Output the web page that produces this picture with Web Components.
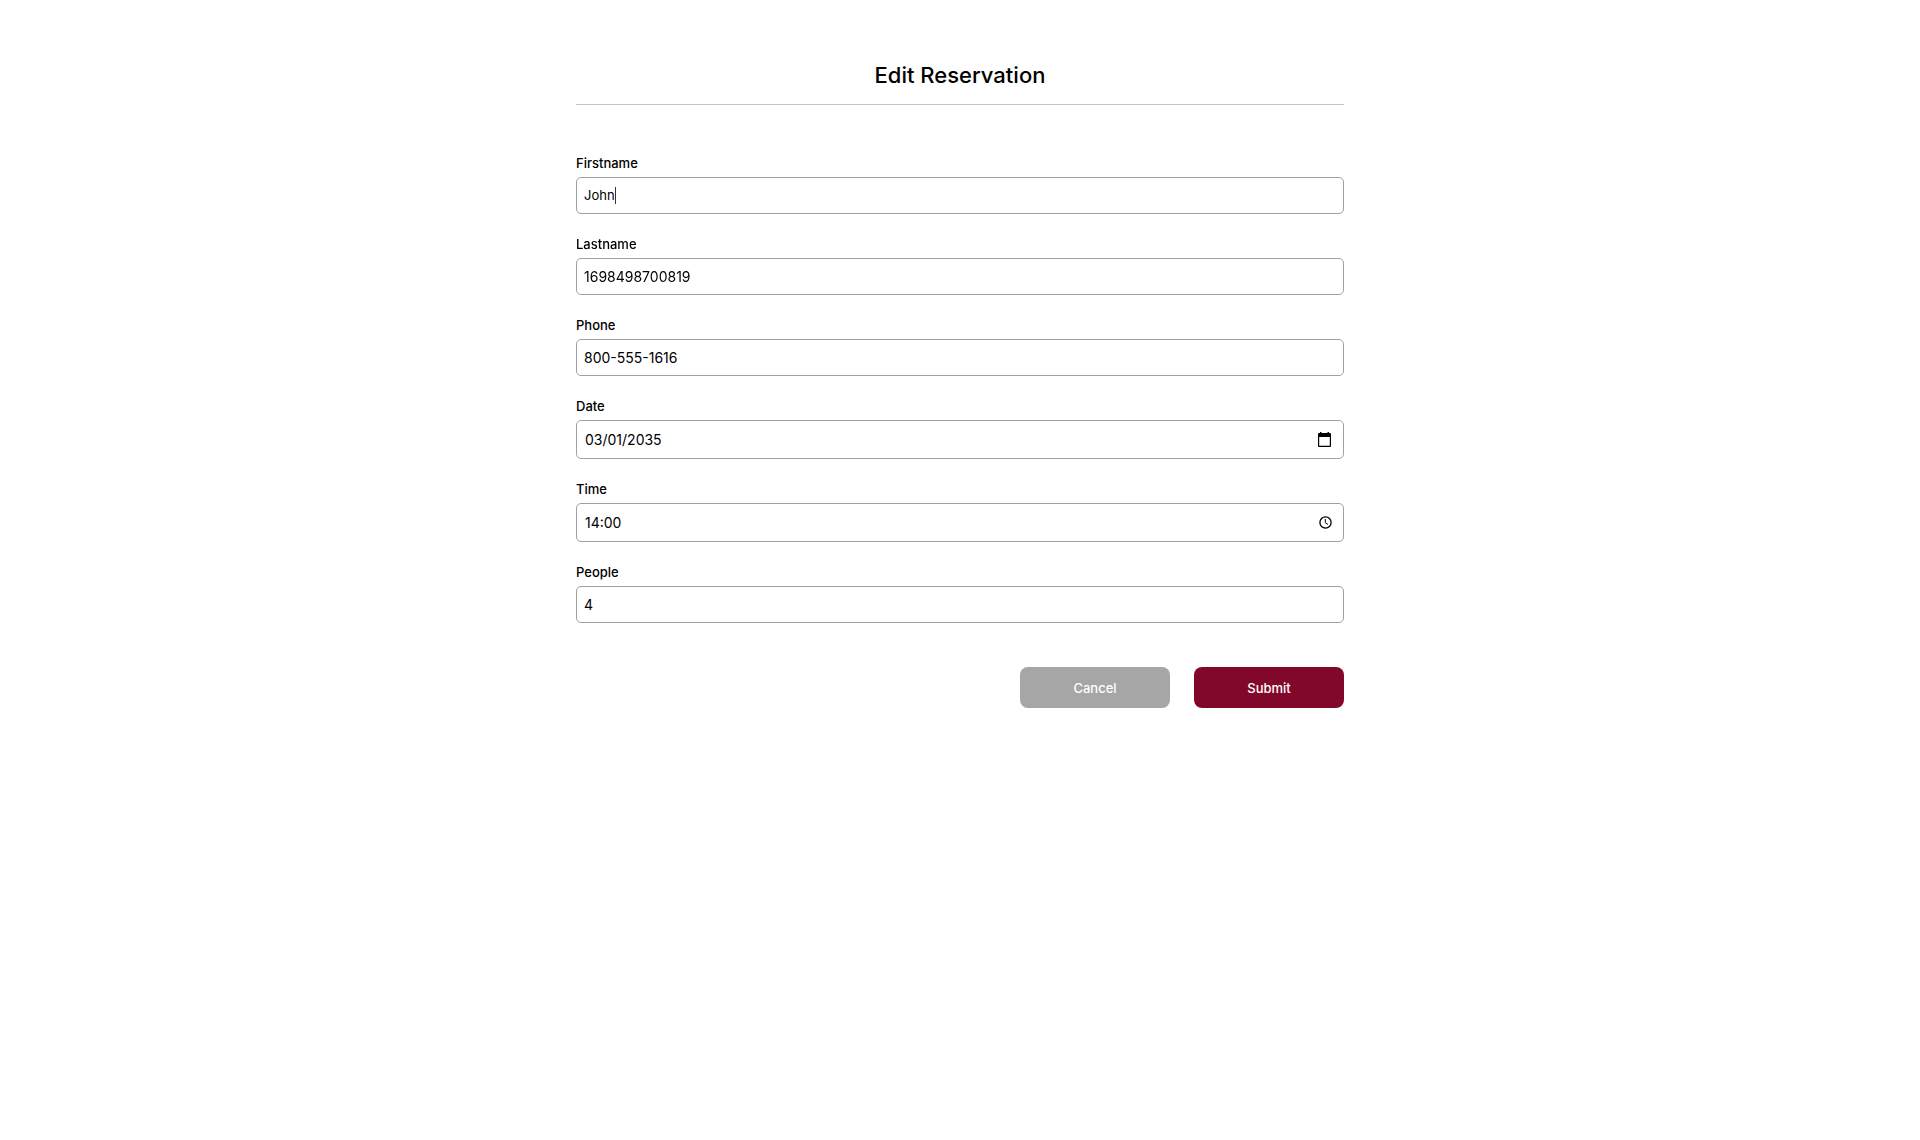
<!DOCTYPE html>
<html lang="en-US">
<head>
<meta charset="utf-8">
<title>Edit Reservation</title>
<style>
  body { margin: 0; background: #fff; color: #000; font-family: Inter, "Liberation Sans", sans-serif; }
</style>
</head>
<body>
<reservation-page></reservation-page>

<script>
class FormField extends HTMLElement {
  connectedCallback() {
    const type = this.getAttribute('type') || 'text';
    const picker = this.getAttribute('picker');
    const focused = this.hasAttribute('focused');
    const icon = picker === 'time'
      ? `<button type="button" aria-label="Show time picker"><svg viewBox="0 0 16 16" width="16" height="16" fill="none" stroke="#000"><circle cx="8.5" cy="7.5" r="5.6" stroke-width="1.3"/><path d="M8.3 4V7.7L11 9.5" stroke-width="1"/></svg></button>`
      : picker === 'date'
      ? `<button type="button" aria-label="Show date picker"><svg viewBox="0 0 16 16" width="16" height="16"><path fill-rule="evenodd" d="M3 0h1.5v1h6V0H12v1h1q1 0 1 1v12q0 1-1 1H2q-1 0-1-1V2q0-1 1-1h1zM2.2 5v8.8h10.6V5z"/></svg></button>`
      : '';
    this.attachShadow({ mode: 'open' }).innerHTML = `
      <style>
        :host { display: flex; flex-direction: column; gap: 5px; }
        label { font-size: 13px; line-height: 17px; font-weight: 500; }
        .box { display: flex; align-items: center; box-sizing: border-box; height: 37px; border: 1px solid #a0a0a0; border-radius: 5px; padding: 0 7px; }
        .box.picker { height: 39px; padding: 0 10px 0 8px; }
        input { flex: 1; min-width: 0; margin: 0; padding: 0; border: 0; outline: 0; background: none; color: inherit; font: 400 14px/17px Inter, "Liberation Sans", sans-serif; }
        :host([focused]) input { flex: none; field-sizing: content; font-size: 13px; caret-color: transparent; }
        .caret { width: 1px; height: 17px; background: #333; }
        button { display: flex; padding: 0; border: 0; background: none; }
      </style>
      <label for="control">${this.getAttribute('label')}</label>
      <div class="box ${picker ? 'picker' : ''}"><input id="control" type="${type}" value="${this.getAttribute('value')}">${focused ? '<span class="caret"></span>' : ''}${icon}</div>`;
    if (focused) {
      this.shadowRoot.querySelector('input').focus();
    }
  }
}
customElements.define('form-field', FormField);

class ActionButton extends HTMLElement {
  connectedCallback() {
    this.attachShadow({ mode: 'open' }).innerHTML = `
      <style>
        :host { display: block; }
        button { width: 150px; height: 41px; border: 0; border-radius: 8px; padding: 2px 0 0; background: #a6a6a6; color: #fff; font: 500 13px/17px Inter, "Liberation Sans", sans-serif; }
        :host([primary]) button { background: #82082b; }
      </style>
      <button type="button"><slot></slot></button>`;
  }
}
customElements.define('action-button', ActionButton);

class ReservationPage extends HTMLElement {
  connectedCallback() {
    this.attachShadow({ mode: 'open' }).innerHTML = `
      <style>
        :host { display: block; padding-top: 61px; }
        main { width: 40%; margin: 0 auto; }
        h1 { margin: 0 0 50px; padding-bottom: 14px; border-bottom: 1px solid #c4c4c4; text-align: center; font-size: 22px; line-height: 29px; font-weight: 500; }
        form { display: flex; flex-direction: column; gap: 22px; }
        footer { display: flex; justify-content: flex-end; gap: 24px; padding-top: 22px; }
      </style>
      <main>
        <h1>Edit Reservation</h1>
        <form>
          <form-field label="Firstname" value="John" focused></form-field>
          <form-field label="Lastname" value="1698498700819"></form-field>
          <form-field label="Phone" value="800-555-1616" type="tel"></form-field>
          <form-field label="Date" value="03/01/2035" picker="date"></form-field>
          <form-field label="Time" value="14:00" picker="time"></form-field>
          <form-field label="People" value="4"></form-field>
          <footer>
            <action-button>Cancel</action-button>
            <action-button primary>Submit</action-button>
          </footer>
        </form>
      </main>`;
  }
}
customElements.define('reservation-page', ReservationPage);
</script>
</body>
</html>
